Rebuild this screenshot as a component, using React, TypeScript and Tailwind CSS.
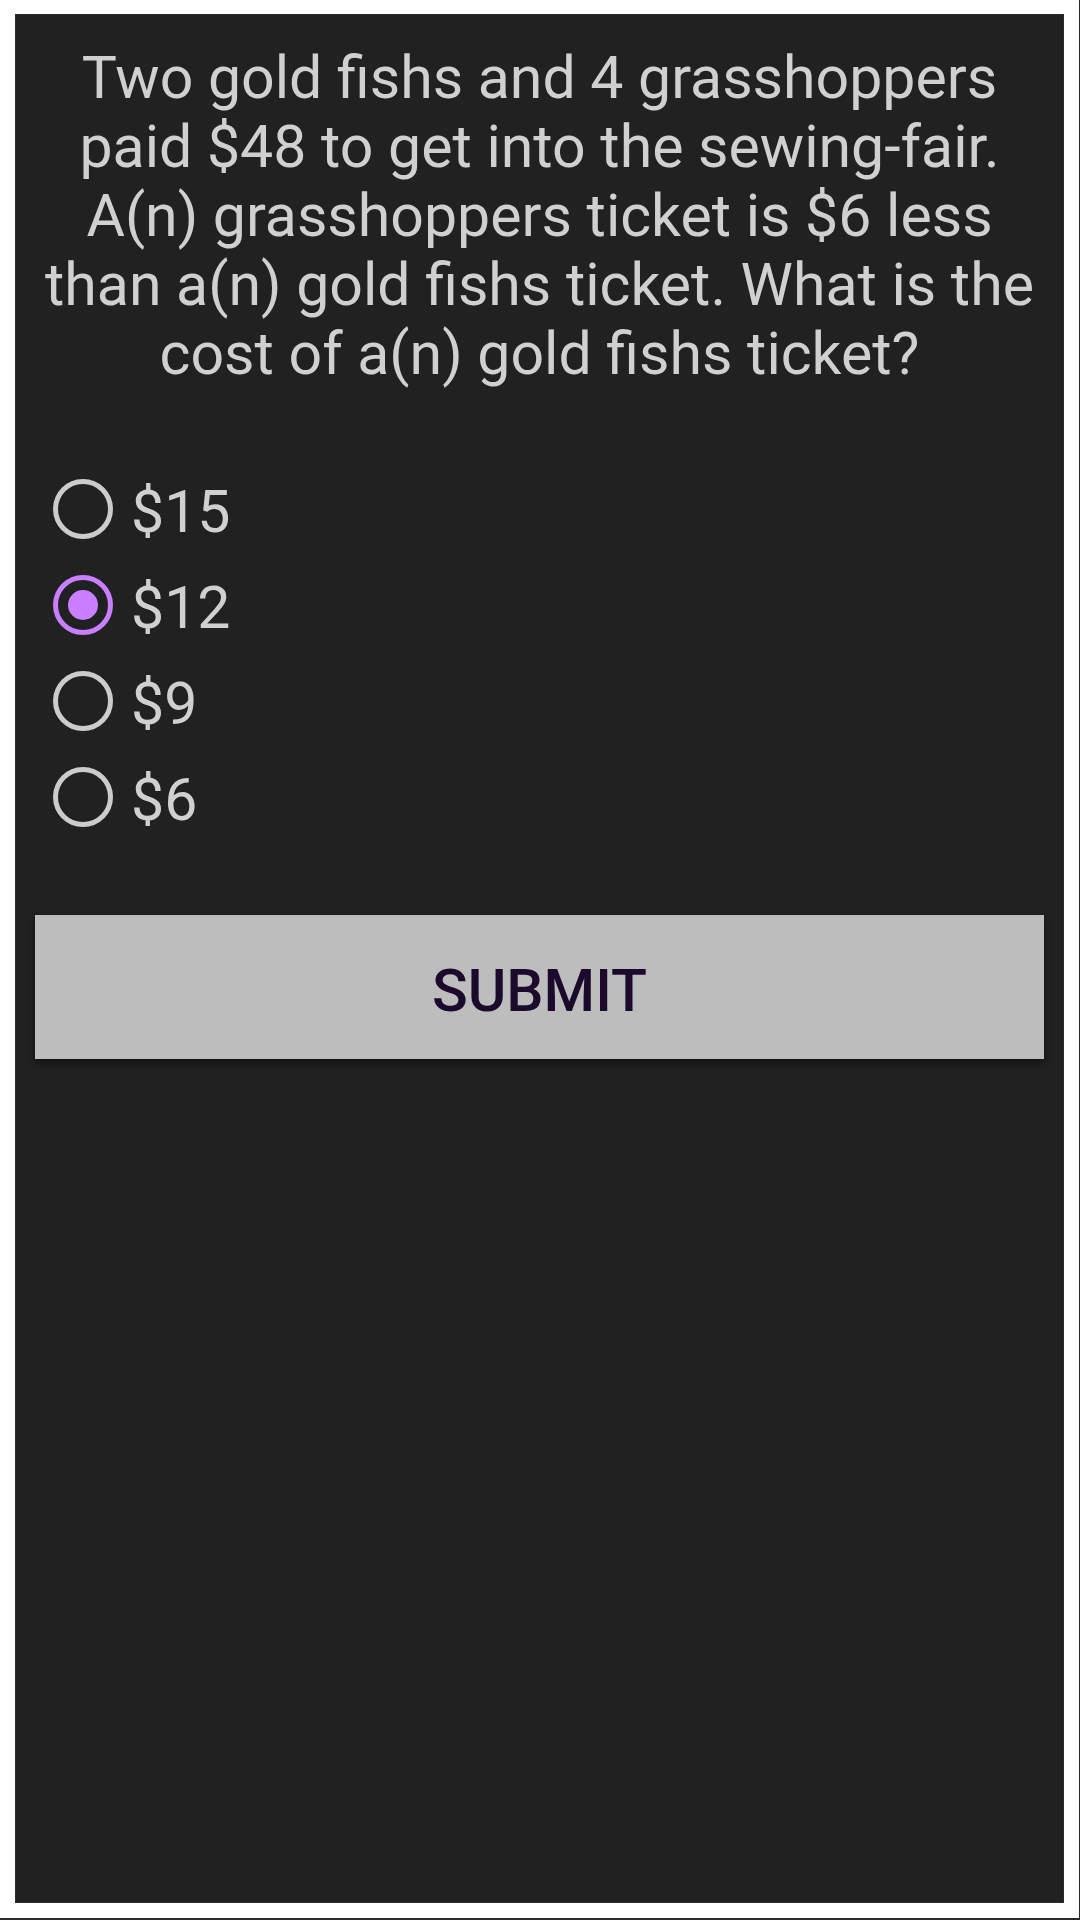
import React, { useState } from "react";

const options = ["$15", "$12", "$9", "$6"];

export default function App() {
  const [sel, setSel] = useState(1);
  return (
    <div
      className="w-[1080px] h-[1920px] bg-white border-r border-b-2 border-[#2a2a2a] pl-[15px] pt-[14px]"
      style={{ fontFamily: "Roboto, 'Noto Sans', sans-serif" }}
    >
      <div className="w-[1049px] h-[1889px] bg-[#212121] border border-[#2c2c2c] flex flex-col">
        <p className="pt-[28px] px-[16px] text-center text-[59px] leading-[69px] text-[#d0d0d0]">
          Two gold fishs and 4 grasshoppers paid $48 to get into the sewing-fair. A(n) grasshoppers ticket is $6 less than a(n) gold fishs ticket. What is the cost of a(n) gold fishs ticket?
        </p>
        <div className="mt-[73px] flex flex-col pl-[37px]">
          {options.map((o, i) => (
            <button
              key={o}
              onClick={() => setSel(i)}
              className="h-[96px] flex items-center gap-[18px] text-left"
            >
              <span
                className={
                  "w-[60px] h-[60px] rounded-full border-[5px] flex items-center justify-center " +
                  (sel === i ? "border-[#c97fff]" : "border-[#cccccc]")
                }
              >
                {sel === i && <span className="w-[30px] h-[30px] rounded-full bg-[#c97fff]" />}
              </span>
              <span className="text-[59px] leading-none text-[#d0d0d0] pt-[4px]">{o}</span>
            </button>
          ))}
        </div>
        <button className="mt-[70px] mx-[19px] h-[144px] pt-[8px] bg-[#bdbdbd] shadow-[0_4px_8px_rgba(0,0,0,0.45)] text-[#1c0a2c] text-[59px] font-medium">
          SUBMIT
        </button>
      </div>
    </div>
  );
}
